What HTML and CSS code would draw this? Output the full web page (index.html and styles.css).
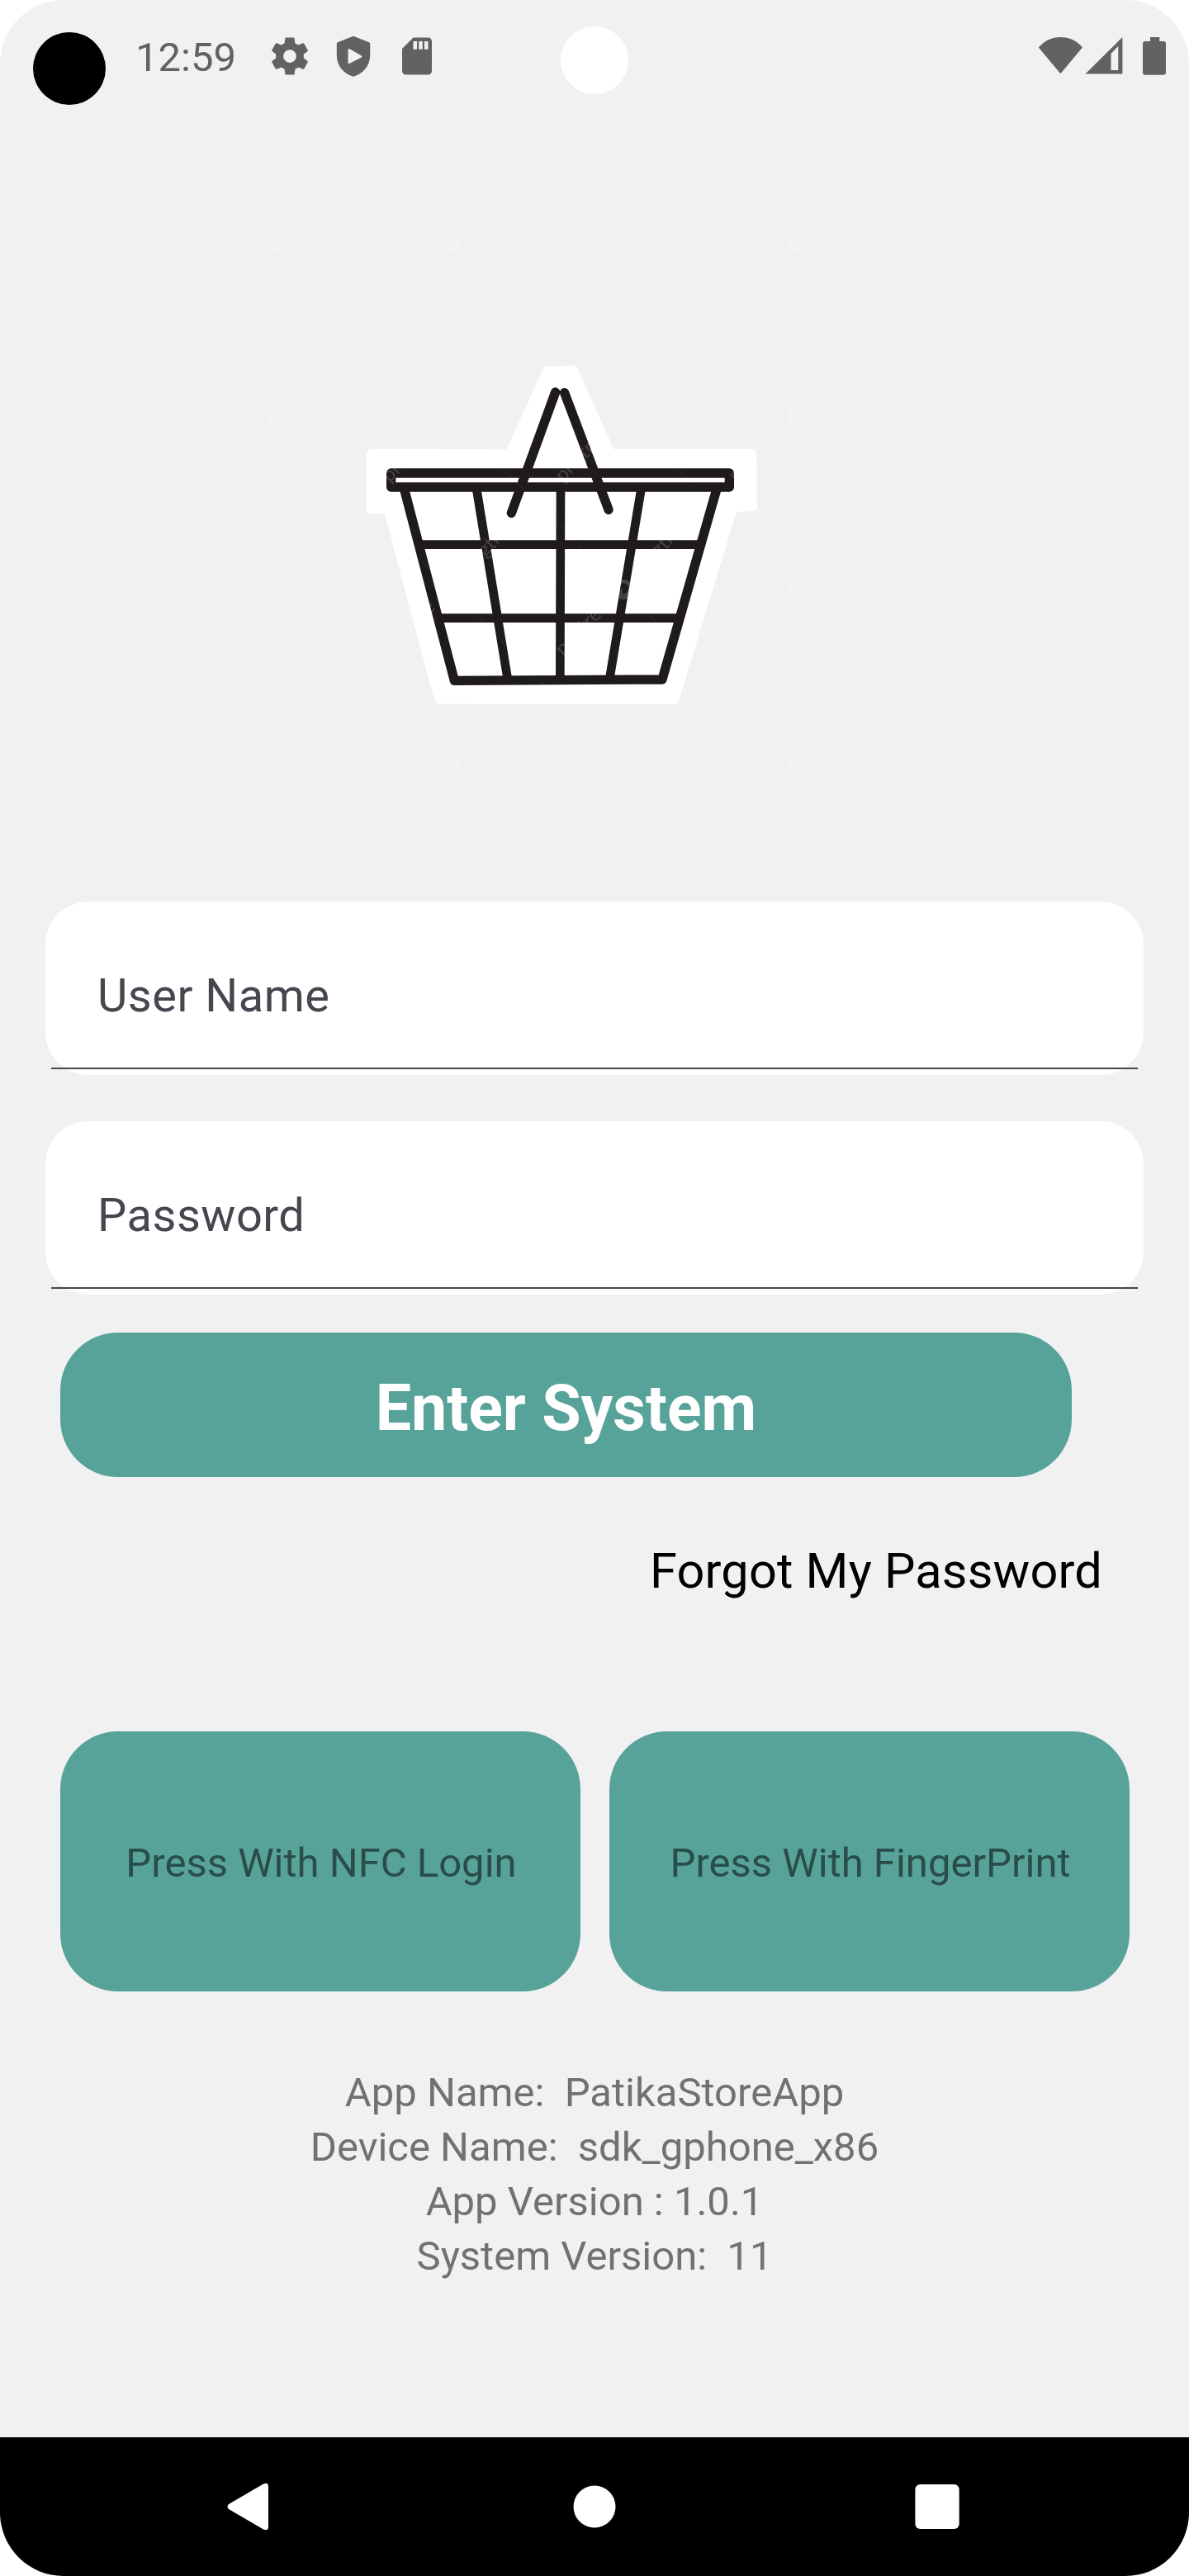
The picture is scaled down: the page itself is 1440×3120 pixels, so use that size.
FILE: index.html
```html
<!DOCTYPE html>
<html lang="en">
<head>
  <meta charset="utf-8">
  <title>PatikaStoreApp</title>
  <link rel="stylesheet" href="styles.css">
</head>
<body>
  <div class="phone">
    <header class="status">
      <span class="status-dot"></span>
      <span class="clock">12:59</span>
      <div class="notifications">
        <svg width="54" height="54" viewBox="0 0 24 24"><path fill-rule="evenodd" d="M19.43 12.98c.04-.32.07-.64.07-.98s-.03-.66-.07-.98l2.11-1.65c.19-.15.24-.42.12-.64l-2-3.46c-.12-.22-.39-.3-.61-.22l-2.49 1c-.52-.4-1.08-.73-1.69-.98l-.38-2.65A.488.488 0 0 0 14 2h-4c-.25 0-.46.18-.49.42l-.38 2.65c-.61.25-1.17.59-1.69.98l-2.49-1c-.23-.09-.49 0-.61.22l-2 3.46c-.13.22-.07.49.12.64l2.11 1.65c-.04.32-.07.65-.07.98s.03.66.07.98l-2.11 1.65c-.19.15-.24.42-.12.64l2 3.46c.12.22.39.3.61.22l2.49-1c.52.4 1.08.73 1.69.98l.38 2.65c.03.24.24.42.49.42h4c.25 0 .46-.18.49-.42l.38-2.65c.61-.25 1.17-.59 1.69-.98l2.49 1c.23.09.49 0 .61-.22l2-3.46c.12-.22.07-.49-.12-.64l-2.11-1.65zM12 15.5a3.5 3.5 0 1 1 0-7 3.5 3.5 0 0 1 0 7z"/></svg>
        <svg width="54" height="54" viewBox="0 0 54 54"><path fill-rule="evenodd" d="M27 2.7 46 10.2Q47.2 10.7 47.2 12V26C47.2 39 38.5 48.500 27 51.800 15.500 48.500 6.800 39 6.800 26V12Q6.800 10.700 8 10.200ZM20.500 20V34.500Q20.500 36.800 22.500 35.800L36.800 28.500Q38.300 27.400 36.800 26.400L22.500 18.300Q20.500 17.400 20.500 20Z"/></svg>
        <svg width="54" height="54" viewBox="0 0 24 24"><path fill-rule="evenodd" d="M18 2h-8L4 8v12c0 1.100.9 2 2 2h12c1.100 0 2-.9 2-2V4c0-1.100-.9-2-2-2zM10 4h2v4.300h-2zM13 4h2v4.300h-2zM16 4h2v4.300h-2z"/></svg>
      </div>
      <div class="system">
        <svg width="54" height="46" viewBox="0 0 54 46"><path d="M.9 12.500C8 4 17 0 27.400 0S46.800 4 53.900 12.500L27.400 44.300Z"/></svg>
        <svg class="signal" width="46" height="46" viewBox="0 0 46 46"><path fill-rule="evenodd" d="M45.400 0V44.600H.5ZM31.500 20V40H40.300V11Z"/></svg>
        <svg width="28" height="46" viewBox="0 0 28 46"><path d="M9 0H20.300V5H25Q28 5 28 8V43Q28 45.700 25 45.700H3Q0 45.700 0 43V8Q0 5 3 5H9Z"/></svg>
      </div>
      <span class="camera"></span>
    </header>

    <svg class="logo" viewBox="0 150 1440 942">
      <defs>
        <pattern id="mark" x="250" y="210" width="210" height="210" patternUnits="userSpaceOnUse">
          <g fill="#fff">
            <text class="mark-text" transform="translate(12 165) rotate(-46)">pngtree</text>
            <text class="mark-text" transform="translate(109 65) rotate(-46)">pngtree</text>
            <path fill-rule="evenodd" d="M85 72a12 12 0 1 1 0 24 12 12 0 0 1 0-24ZM85 76q-6 3-5 9 2-2 4-2-1 5 1 7 5-2 6-7t-6-7Z"/>
          </g>
        </pattern>
      </defs>
      <g transform="translate(420 420) scale(.33333)">
        <path fill="#fff" d="M730 71 818 68Q834 68 841 84L970 372H1470Q1489 372 1489 392L1491 580Q1491 597 1472 598L1416 600 1208 1280Q1202 1299 1184 1299L340 1298Q323 1298 317 1280L137 605H92Q71 605 71 585V392Q71 372 92 372L581 373 711 84Q717 71 730 71Z"/>
        <g fill="none" stroke="#1f1a1b" stroke-width="34" stroke-linecap="round" stroke-linejoin="round">
          <path d="M161 459H1390V510H161Z"/>
          <path d="M210 522 391 1213 1146 1209 1343 520"/>
          <path stroke-width="32" stroke-linecap="butt" d="M472 520 584 1205M777 520 775 1205M1069 520 955 1205M265 719H1285M335 986H1210"/>
          <path stroke-width="34" d="M758 165 598 604M791 167 951 592"/>
        </g>
        <path fill="none" stroke="#fff" stroke-opacity=".14" stroke-width="2" d="M565 440 650 525M765 640 858 733M1198 440 1283 525M260 768 305 812M462 968 580 1086M1092 968 1200 1076M705 1215 720 1230"/>
      </g>
      <rect x="250" y="210" width="856" height="854" fill="url(#mark)" opacity=".17"/>
    </svg>

    <main>
      <div class="fields">
        <div class="field">User Name</div>
        <div class="field">Password</div>
      </div>
      <div class="enter">Enter System</div>
      <div class="forgot">Forgot My Password</div>
      <div class="tiles">
        <div class="tile">Press With NFC Login</div>
        <div class="tile">Press With FingerPrint</div>
      </div>
      <div class="info">
        <div class="info-line">App Name:  PatikaStoreApp</div>
        <div class="info-line">Device Name:  sdk_gphone_x86</div>
        <div class="info-line">App Version : 1.0.1</div>
        <div class="info-line">System Version:  11</div>
      </div>
    </main>

    <nav class="navbar">
      <svg width="64" height="64" viewBox="0 0 64 64"><path d="M4 29 46 4.500Q51.500 2 52 7V57Q51.500 62 46 59.500L4 35Q1 32 4 29Z"/></svg>
      <svg width="64" height="64" viewBox="0 0 64 64"><circle cx="32" cy="32" r="25.500"/></svg>
      <svg width="64" height="64" viewBox="0 0 64 64"><rect x="5.400" y="5" width="53.300" height="54" rx="6"/></svg>
    </nav>
  </div>
</body>
</html>
```

FILE: styles.css
```css
* {
  box-sizing: border-box;
}

body {
  margin: 0;
  background: #fff;
  font-family: Roboto, "Liberation Sans", sans-serif;
}

svg {
  display: block;
  flex-shrink: 0;
}

.phone {
  display: flex;
  flex-direction: column;
  width: 1440px;
  height: 3120px;
  overflow: hidden;
  border-radius: 77px;
  background: #f1f1f1;
}

.status {
  position: relative;
  display: flex;
  flex-shrink: 0;
  align-items: flex-start;
  height: 150px;
  padding: 39px 28px 0 40px;
  fill: #626262;
}

.status-dot {
  width: 88px;
  height: 88px;
  border-radius: 50%;
  background: #000;
}

.clock {
  width: 160px;
  margin: 2px 0 0 36px;
  color: #626262;
  font-size: 49px;
  line-height: 58px;
}

.notifications {
  display: flex;
  gap: 23px;
  margin-top: 2px;
}

.system {
  display: flex;
  margin: 6px 0 0 auto;
}

.signal {
  margin: 0 24px 0 3px;
}

.camera {
  position: absolute;
  top: 32px;
  left: 679px;
  width: 82px;
  height: 82px;
  border-radius: 50%;
  background: #fff;
}

.logo {
  width: 1440px;
  height: 942px;
}

.mark-text {
  font: 24px Lato, sans-serif;
}

.fields {
  display: flex;
  flex-direction: column;
  gap: 56px;
  padding: 0 55px;
}

.field {
  position: relative;
  height: 210px;
  padding: 81px 63px 0;
  border-radius: 52px;
  background: #fff;
  color: #49454f;
  font-size: 56px;
  line-height: 66px;
  letter-spacing: .5px;
}

/* The underline runs past the rounded corners. */
.field::after {
  content: "";
  position: absolute;
  right: 7px;
  bottom: 7px;
  left: 7px;
  height: 2px;
  background: #49454f;
}

.enter {
  width: 1225px;
  height: 175px;
  margin: 46px 0 0 73px;
  padding-top: 47px;
  border-radius: 70px;
  background: #58a399;
  color: #fff;
  font-size: 77px;
  font-weight: 700;
  line-height: 90px;
  text-align: center;
}

.forgot {
  height: 308px;
  padding: 79px 105px 0 0;
  color: #000;
  font-size: 59.5px;
  line-height: 70px;
  letter-spacing: .16px;
  text-align: right;
}

.tiles {
  display: flex;
  gap: 35px;
  padding: 0 72px 0 73px;
}

.tile {
  flex: 1;
  height: 315px;
  padding: 131px 0 0 2px;
  border-radius: 70px;
  background: #58a399;
  color: #294d48;
  font-size: 49px;
  line-height: 58px;
  text-align: center;
}

.info {
  margin-top: 90px;
  color: #717171;
  font-size: 49px;
  line-height: 66px;
  text-align: center;
}

.info-line {
  white-space: pre;
}

.navbar {
  display: flex;
  flex-shrink: 0;
  align-items: center;
  justify-content: space-between;
  height: 168px;
  margin-top: auto;
  padding: 0 273px;
  background: #000;
  fill: #fff;
}
```
